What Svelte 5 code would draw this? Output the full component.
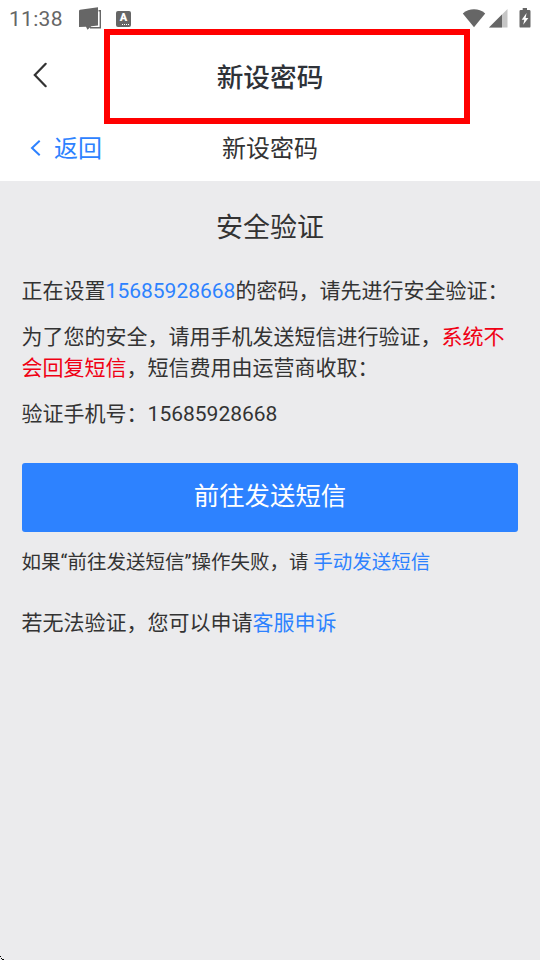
<script lang="ts">
  const phone = "15685928668";
  const title = "新设密码";
</script>

<div class="screen">
  <div class="status">
    <span class="time">11:38</span>
    <svg class="chat" width="24" height="24" viewBox="0 0 24 24">
      <path d="M20.5 3.7H22.3V20.8H12" fill="none" stroke="#666" stroke-width="1.4" />
      <path d="M1 4Q1 3 2 2.8L20 .3V18.5L13.3 19.2 9.5 22.8 8 19.7 1 20Z" fill="#666" />
    </svg>
    <span class="lang">A<i></i></span>
    <div class="signals">
      <svg width="24" height="20" viewBox="0 0 24 20">
        <path d="M12 19.3.8 5.5C4 2.5 8 1.2 12 1.2S20 2.5 23.2 5.5Z" fill="#666" />
      </svg>
      <svg width="19" height="20" viewBox="0 0 19 20">
        <path d="M0 19.5 18.5 1V19.5Z" fill="#c6c6c6" />
        <path d="M0 19.5 13 6.5V19.5Z" fill="#666" />
      </svg>
      <svg width="12" height="20" viewBox="0 0 12 20">
        <path d="M3.7 0H8V2H10.2Q11.5 2 11.5 3.3V18.4Q11.5 19.6 10.2 19.6H1.7Q.5 19.6.5 18.4V3.3Q.5 2 1.7 2H3.7Z" fill="#666" />
        <path d="M7.6 5 2.7 11.8H5.3L4.2 16.8 9.4 10H6.6Z" fill="#fff" />
      </svg>
    </div>
  </div>

  <header class="app-bar">
    <svg class="back" width="16" height="28" viewBox="0 0 16 28">
      <path d="M13.7 2.8 2.8 14 13.7 25.2" />
    </svg>
    <h1>{title}</h1>
    <div class="highlight"></div>
  </header>

  <nav class="sub-bar">
    <a href="#back">
      <svg width="12" height="18" viewBox="0 0 12 18">
        <path d="M10.7 1.7 3 9 10.7 16.3" />
      </svg>
      返回
    </a>
    <h2>{title}</h2>
  </nav>

  <main>
    <h3>安全验证</h3>
    <p>正在设置<span class="link">{phone}</span>的密码，请先进行安全验证：</p>
    <p>
      为了您的安全，请用手机发送短信进行验证，<em>系统不会回复短信</em>，短信费用由运营商收取：
    </p>
    <p>验证手机号：{phone}</p>
    <button>前往发送短信</button>
    <p class="hint">
      如果“前往发送短信”操作失败，请 <a class="link" href="#manual">手动发送短信</a>
    </p>
    <p class="appeal">若无法验证，您可以申请<a class="link" href="#appeal">客服申诉</a></p>
  </main>

  <svg class="corner" width="4" height="4" viewBox="0 0 4 4">
    <path d="M0 0h1v1H0zM1 2h1v1H1zM2 3h2v1H2z" />
  </svg>
</div>

<style>
  :global(body) {
    margin: 0;
  }

  .screen {
    position: relative;
    display: flex;
    flex-direction: column;
    width: 540px;
    height: 960px;
    overflow: hidden;
    background: #ebebed;
    color: #333;
    font-family: Roboto, "Noto Sans CJK SC", sans-serif;
  }

  h1,
  h2,
  h3,
  p {
    margin: 0;
  }

  a {
    text-decoration: none;
  }

  .status {
    display: flex;
    align-items: center;
    box-sizing: border-box;
    height: 36px;
    padding: 1px 9px 0;
    background: #fff;
    color: #666;
  }

  .time {
    width: 69px;
    font-size: 21px;
    letter-spacing: 0.3px;
  }

  .lang {
    display: flex;
    flex-direction: column;
    align-items: center;
    width: 15px;
    height: 16px;
    margin-left: 14px;
    border-radius: 2px;
    background: #666;
    color: #fff;
    font-size: 11px;
    font-weight: 900;
    line-height: 13px;
  }

  .lang i {
    width: 7px;
    margin-left: 4px;
    border-top: 1px dotted #fff;
  }

  .signals {
    display: flex;
    gap: 3px;
    margin: -1px 0 0 auto;
  }

  .signals svg:last-child {
    margin-left: 8px;
  }

  .app-bar {
    position: relative;
    display: flex;
    align-items: center;
    justify-content: center;
    box-sizing: border-box;
    height: 80px;
    padding-top: 4px;
    background: #fff;
  }

  .back {
    position: absolute;
    left: 32px;
    top: 25px;
    fill: none;
    stroke: #333;
    stroke-width: 2.2;
    stroke-linecap: round;
  }

  h1 {
    font-size: 26.7px;
    font-weight: 500;
    line-height: 40px;
    color: #2e3238;
  }

  .highlight {
    position: absolute;
    left: 104px;
    top: -7px;
    box-sizing: border-box;
    width: 366px;
    height: 95px;
    border: 6px solid #f00;
  }

  .sub-bar {
    display: grid;
    grid-template-columns: 1fr auto 1fr;
    align-items: center;
    box-sizing: border-box;
    height: 65px;
    padding: 0 29px 4px;
    background: #fff;
    font-size: 24px;
  }

  .sub-bar a {
    display: flex;
    align-items: center;
    gap: 13px;
    color: #2d82ff;
  }

  .sub-bar svg {
    margin-top: 2px;
    fill: none;
    stroke: #2d82ff;
    stroke-width: 2;
  }

  h2 {
    font-size: 24px;
    font-weight: 400;
  }

  main {
    padding: 27px 21.6px 0;
    font-size: 21px;
    line-height: 31px;
  }

  h3 {
    margin-bottom: 28px;
    font-size: 27px;
    font-weight: 400;
    line-height: 40px;
    text-align: center;
  }

  p {
    margin-bottom: 15px;
  }

  .link {
    color: #2d82ff;
  }

  em {
    color: #f00014;
    font-style: normal;
  }

  button {
    display: block;
    width: 100%;
    height: 69px;
    margin-top: 33px;
    padding: 0 0 7px;
    border: 0;
    border-radius: 3px;
    background: #2d82ff;
    color: #fff;
    font-family: inherit;
    font-size: 25.4px;
  }

  .hint {
    margin: 15px 0 30px;
    font-size: 19.5px;
  }

  .corner {
    position: absolute;
    left: 0;
    bottom: 0;
  }
</style>
